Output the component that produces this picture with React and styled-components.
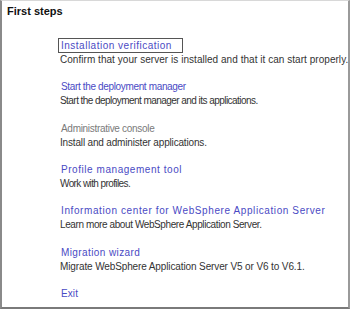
import styled, { createGlobalStyle } from "styled-components";

const Global = createGlobalStyle`
  html, body {
    margin: 0;
    padding: 0;
    background: #fff;
  }
  body {
    font-family: "Liberation Sans", Arial, sans-serif;
  }
`;

const Frame = styled.div`
  box-sizing: border-box;
  width: 350px;
  height: 309px;
  border-left: 2px solid #8a8a8a;
  border-right: 2px solid #9a9a9a;
  border-bottom: 2px solid #7a7a7a;
  border-top: 1px solid #d8d8d8;
  background: #fff;
  display: flex;
  flex-direction: column;
`;

const Heading = styled.h1`
  margin: 0;
  padding: 4px 0 0 5px;
  font-size: 11px;
  line-height: 13px;
  font-weight: bold;
  color: #111;
`;

const List = styled.ul`
  list-style: none;
  margin: 0;
  padding: 20px 0 0 58px;
  display: flex;
  flex-direction: column;
  gap: 13.35px;
`;

const Item = styled.li`
  display: flex;
  flex-direction: column;
  align-items: flex-start;
`;

const Link = styled.a`
  font-size: 10px;
  line-height: 13px;
  color: ${(p) => (p.$disabled ? "#7a7a7a" : "#4a4ac4")};
  text-decoration: none;
  letter-spacing: ${(p) => p.$track}px;
  padding: 0 ${(p) => (p.$focused ? 10 : 2)}px 0 2px;
  margin-left: -2px;
  border: 1px solid ${(p) => (p.$focused ? "#555" : "transparent")};
`;

const Desc = styled.p`
  margin: 0;
  font-size: 10px;
  line-height: 13px;
  color: #333;
  white-space: nowrap;
  letter-spacing: ${(p) => p.$track}px;
`;

const steps = [
  {
    title: "Installation verification",
    titleTrack: 0.5,
    text: "Confirm that your server is installed and that it can start properly.",
    textTrack: 0.04,
    focused: true,
  },
  {
    title: "Start the deployment manager",
    titleTrack: -0.35,
    text: "Start the deployment manager and its applications.",
    textTrack: -0.55,
  },
  {
    title: "Administrative console",
    titleTrack: -0.3,
    text: "Install and administer applications.",
    textTrack: -0.17,
    disabled: true,
  },
  {
    title: "Profile management tool",
    titleTrack: 0.55,
    text: "Work with profiles.",
    textTrack: -0.6,
  },
  {
    title: "Information center for WebSphere Application Server",
    titleTrack: 0.6,
    text: "Learn more about WebSphere Application Server.",
    textTrack: -0.4,
  },
  {
    title: "Migration wizard",
    titleTrack: 0.4,
    text: "Migrate WebSphere Application Server V5 or V6 to V6.1.",
    textTrack: -0.12,
  },
  { title: "Exit", titleTrack: 0.1 },
];

export default function App() {
  return (
    <>
      <Global />
      <Frame>
        <Heading>First steps</Heading>
        <List>
          {steps.map((s) => (
            <Item key={s.title}>
              <Link
                href="#"
                $focused={s.focused}
                $disabled={s.disabled}
                $track={s.titleTrack}
              >
                {s.title}
              </Link>
              {s.text && <Desc $track={s.textTrack}>{s.text}</Desc>}
            </Item>
          ))}
        </List>
      </Frame>
    </>
  );
}
